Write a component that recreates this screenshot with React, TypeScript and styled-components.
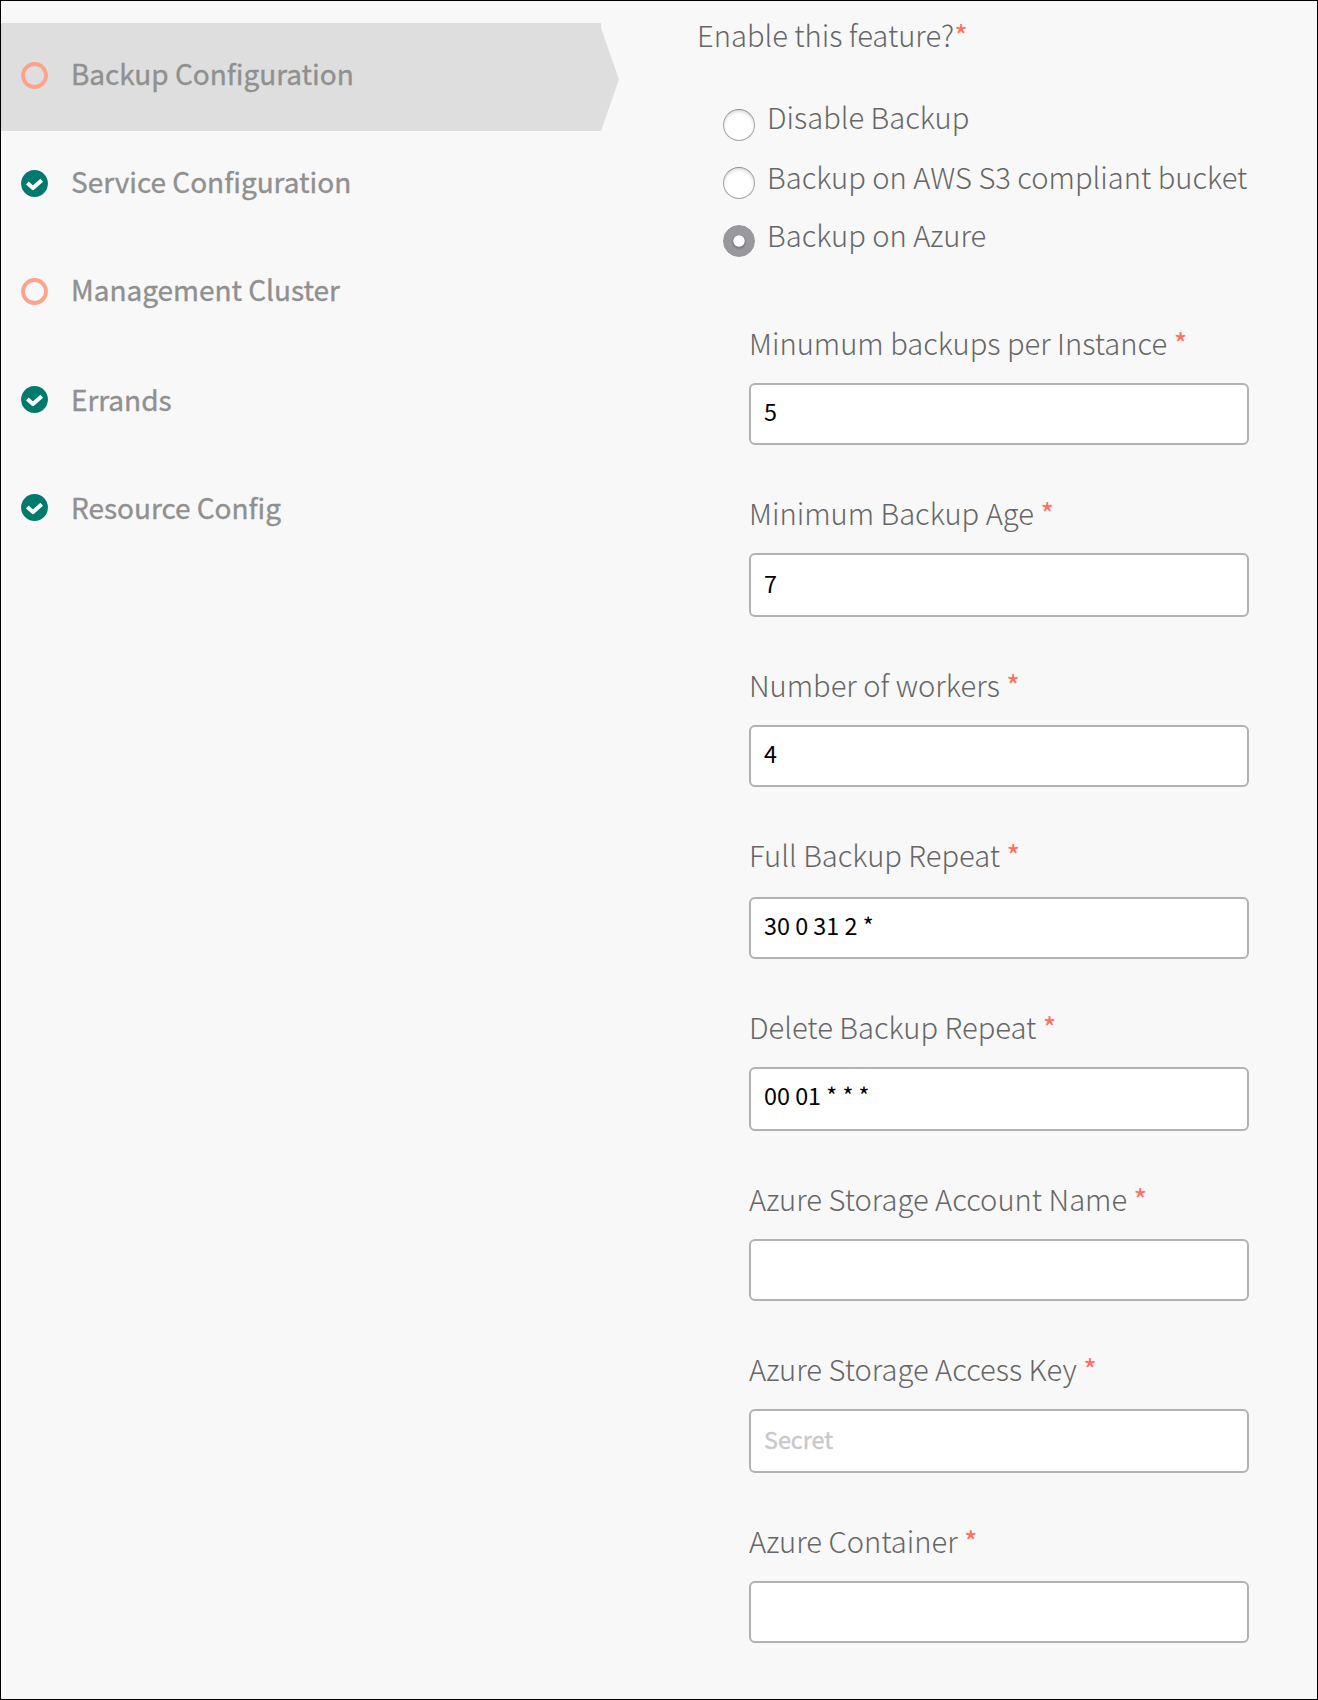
import React, { useState } from "react";
import styled, { createGlobalStyle } from "styled-components";

const GlobalStyle = createGlobalStyle`
  * { box-sizing: border-box; }
  body { margin: 0; background: #f8f8f8; }
  body, input { font-family: "Noto Sans CJK SC", "Noto Sans", sans-serif; }
`;

const Page = styled.div`
  display: flex;
  height: 1700px;
  border: 1px solid #000;
  background: #f8f8f8;
`;

const Sidebar = styled.nav`
  width: 618px;
  flex: none;
  padding-top: 22px;
`;

const NavItem = styled.a<{ $active?: boolean }>`
  display: flex;
  align-items: flex-start;
  position: relative;
  width: 600px;
  height: 108px;
  padding: 39px 0 0 20px;
  background: ${(p) => (p.$active ? "#dedede" : "transparent")};
  color: #909090;
  text-decoration: none;
`;

const Arrow = styled.span`
  position: absolute;
  left: 100%;
  top: 5px;
  width: 18px;
  height: 103px;
  background: #dedede;
  clip-path: polygon(0 0, 100% 50%, 0 100%);
`;

const StatusIcon = styled.svg`
  display: block;
  flex: none;
  width: 27px;
  height: 27px;
`;

const NavLabel = styled.span<{ $drop?: boolean }>`
  margin: ${(p) => (p.$drop ? "-9px" : "-11px")} 0 0 23px;
  font-size: 28px;
  letter-spacing: -0.03px;
  line-height: 44px;
  white-space: nowrap;
  -webkit-text-stroke: 0.35px currentColor;
`;

const Form = styled.form`
  width: 552px;
  margin-left: 78px;
`;

const Title = styled.div`
  padding-top: 13px;
  font-size: 29.15px;
  font-weight: 300;
  line-height: 40px;
  color: #666;
`;

const Star = styled.span`
  font-size: 29.15px;
  font-weight: 400;
  line-height: 1;
  color: #ff6f61;
`;

const RadioGroup = styled.div`
  display: flex;
  flex-direction: column;
  gap: 26px;
  padding: 55px 0 0 26px;
`;

const RadioRow = styled.label`
  display: flex;
  height: 32px;
`;

const RadioInput = styled.input`
  appearance: none;
  flex: none;
  width: 32px;
  height: 32px;
  margin: 0;
  border-radius: 50%;
  border: 1px solid #a6a6a6;
  border-top-color: #8e8e8e;
  background: #fff;
  box-shadow: inset 0 2px 3px rgba(0, 0, 0, 0.14);
  &:checked {
    border-color: #96969b;
    background:
      radial-gradient(circle at 50% 50%, #fff 0 5.2px, transparent 6.1px),
      radial-gradient(circle at 50% 54%, #7e7e83 0 5.5px, #98989d 8px);
    box-shadow: none;
  }
`;

const RadioText = styled.span<{ $rise: number }>`
  margin: ${(p) => -p.$rise}px 0 0 12px;
  font-size: 29.15px;
  font-weight: 300;
  line-height: 40px;
  white-space: nowrap;
  color: #666;
`;

const Fields = styled.div`
  padding: 65px 0 0 52px;
`;

const Field = styled.div`
  margin-bottom: 47px;
`;

const FieldLabel = styled.label<{ $gap: number }>`
  display: block;
  height: 40px;
  margin-bottom: ${(p) => p.$gap}px;
  font-size: 29.15px;
  font-weight: 300;
  line-height: 40px;
  white-space: nowrap;
  color: #666;
`;

const TextInput = styled.input<{ $h: number; $lift: number }>`
  display: block;
  width: 500px;
  height: ${(p) => p.$h}px;
  padding: 0 13px ${(p) => p.$lift}px;
  border: 2px solid #b2b2b2;
  border-radius: 6px;
  background: #fff;
  font-size: 23.35px;
  color: #000;
  outline: none;
  &::placeholder {
    color: #c8c8c8;
    opacity: 1;
    -webkit-text-stroke: 0.4px #c8c8c8;
  }
`;

const steps = [
  { label: "Backup Configuration", done: false, active: true },
  { label: "Service Configuration", done: true },
  { label: "Management Cluster", done: false },
  { label: "Errands", done: true, drop: true },
  { label: "Resource Config", done: true, drop: true },
];

const options = [
  { label: "Disable Backup", rise: 13 },
  { label: "Backup on AWS S3 compliant bucket", rise: 11 },
  { label: "Backup on Azure", rise: 11 },
];

const fields = [
  { label: "Minumum backups per Instance", value: "5", h: 62, gap: 21, lift: 7 },
  { label: "Minimum Backup Age", value: "7", h: 64, gap: 21, lift: 5 },
  { label: "Number of workers", value: "4", h: 62, gap: 21, lift: 7 },
  { label: "Full Backup Repeat", value: "30 0 31 2 *", h: 62, gap: 23, lift: 7 },
  { label: "Delete Backup Repeat", value: "00 01 * * *", h: 64, gap: 21, lift: 9 },
  { label: "Azure Storage Account Name", value: "", h: 62, gap: 21, lift: 7 },
  { label: "Azure Storage Access Key", value: "", placeholder: "Secret", h: 64, gap: 21, lift: 5 },
  { label: "Azure Container", value: "", h: 62, gap: 21, lift: 7 },
];

function Status({ done }: { done: boolean }) {
  return (
    <StatusIcon viewBox="0 0 27 27">
      {done ? (
        <>
          <circle cx="13.5" cy="13.5" r="13.4" fill="#007a6c" />
          <path
            d="M6.3 13.1 L12 18.1 L20.7 10.2"
            fill="none"
            stroke="#fff"
            strokeWidth="4"
            strokeLinejoin="round"
          />
        </>
      ) : (
        <circle cx="13.5" cy="13.5" r="11.5" fill="none" stroke="#ffa28b" strokeWidth="3.8" />
      )}
    </StatusIcon>
  );
}

export default function App() {
  const [selected, setSelected] = useState(2);
  return (
    <>
      <GlobalStyle />
      <Page>
        <Sidebar>
          {steps.map((s) => (
            <NavItem key={s.label} $active={s.active}>
              <Status done={s.done} />
              <NavLabel $drop={s.drop}>{s.label}</NavLabel>
              {s.active && <Arrow />}
            </NavItem>
          ))}
        </Sidebar>
        <Form>
          <Title>
            Enable this feature?<Star>*</Star>
          </Title>
          <RadioGroup>
            {options.map((o, i) => (
              <RadioRow key={o.label}>
                <RadioInput
                  type="radio"
                  name="backup"
                  checked={selected === i}
                  onChange={() => setSelected(i)}
                />
                <RadioText $rise={o.rise}>{o.label}</RadioText>
              </RadioRow>
            ))}
          </RadioGroup>
          <Fields>
            {fields.map((f) => (
              <Field key={f.label}>
                <FieldLabel $gap={f.gap}>
                  {f.label} <Star>*</Star>
                </FieldLabel>
                <TextInput
                  type="text"
                  defaultValue={f.value}
                  placeholder={f.placeholder}
                  $h={f.h}
                  $lift={f.lift}
                />
              </Field>
            ))}
          </Fields>
        </Form>
      </Page>
    </>
  );
}
